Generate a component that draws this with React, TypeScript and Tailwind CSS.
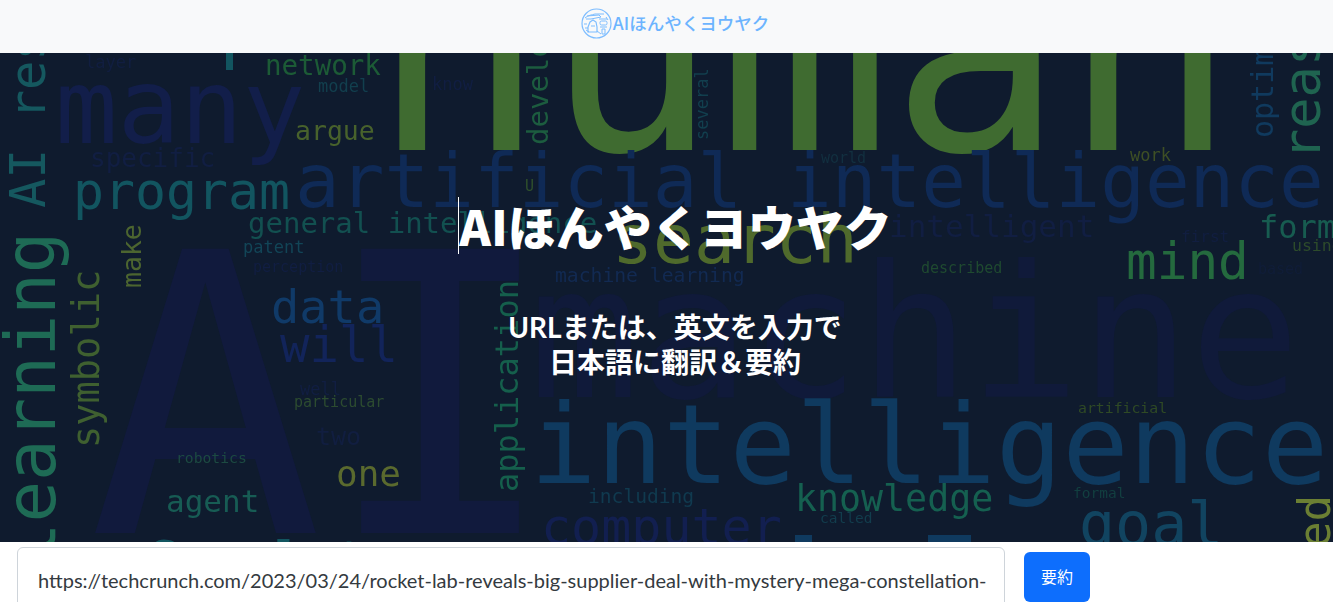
const lato = "font-['Lato','Noto_Sans_CJK_JP',sans-serif]";

// word cloud picture: [text, x, baseline, font size, colour, vertical]
type Word = [string, number, number, number, string, boolean?];

const words: Word[] = [
  ["AI", 88, 533, 390, "#111a3d"],
  ["machine", 529, 397, 183, "#101a3a"],
  ["human", 372, 150, 287, "#3f6b30"],
  ["intelligence", 530, 483, 110.5, "#0f3a5f"],
  ["artificial intelligence", 295, 207, 74.3, "#0f2a56"],
  ["many", 55, 143, 104, "#121e4a"],
  ["program", 73, 209, 51.5, "#125560"],
  ["network", 265, 75, 27.5, "#1c5b36"],
  ["model", 318, 92, 17, "#123f4e"],
  ["argue", 295, 140, 26.5, "#48622c"],
  ["specific", 90, 167, 26, "#111e42"],
  ["layer", 85, 68, 17, "#111e40"],
  ["general intelligence", 248, 233, 29, "#125050"],
  ["patent", 243, 253, 17, "#124557"],
  ["perception", 253, 272, 15, "#111e42"],
  ["data", 271, 323, 47, "#103a68"],
  ["will", 280, 362, 49, "#12245a"],
  ["well", 300, 395, 17, "#111e42"],
  ["particular", 294, 407, 15, "#2c4b30"],
  ["two", 316, 445, 25, "#111e40"],
  ["one", 336, 486, 36, "#5a6a2e"],
  ["robotics", 176, 463, 14.7, "#1c4a42"],
  ["agent", 166, 512, 31, "#175c54"],
  ["Searlet", 148, 578, 52, "#125560"],
  ["know", 432, 90, 17, "#111e42"],
  ["U", 525, 191, 15, "#2f4f2c"],
  ["search", 612, 263, 68, "#4f6a2c"],
  ["machine learning", 555, 282, 19.7, "#122a52"],
  ["world", 821, 163, 15, "#123040"],
  ["work", 1130, 161, 17, "#3e4f25"],
  ["intelligent", 889, 237, 31, "#111e42"],
  ["form", 1259, 238, 32, "#175c50"],
  ["using", 1292, 251, 16.5, "#2d4b2b"],
  ["mind", 1126, 279, 51, "#246a3e"],
  ["first", 1181, 242, 16, "#111e40"],
  ["described", 921, 273, 15, "#1f4a30"],
  ["based", 1258, 274, 15, "#101d38"],
  ["artificial", 1078, 413, 14.8, "#2f4a25"],
  ["formal", 1073, 498, 14.5, "#123f40"],
  ["called", 820, 523, 14.5, "#123d4d"],
  ["including", 588, 503, 19.6, "#103a4f"],
  ["knowledge", 795, 511, 36.6, "#156050"],
  ["computer", 541, 544, 50, "#121f50"],
  ["goal", 1079, 545, 60, "#114460"],
  ["make", 141, 288, 26.5, "#4c6530", true],
  ["symbolic", 99, 448, 37, "#3f6030", true],
  ["application", 518, 492, 32, "#155f4c", true],
  ["develop", 548, 145, 29, "#1c5c3f", true],
  ["several", 708, 140, 17, "#123f4e", true],
  ["optimization", 1273, 138, 30, "#103a5e", true],
  ["reasoning", 1320, 160, 52, "#1f6450", true],
  ["used", 1330, 601, 44, "#6b7f33", true],
  ["learning", 55, 564, 69, "#1e6b55", true],
  ["AI research", 45, 208, 49, "#15585f", true],
];

const WordCloud = () => {
  return (
    <svg
      className="absolute inset-0 blur-[0.5px]"
      width="1333"
      height="489"
      viewBox="0 53 1333 489"
      fontFamily="'DejaVu Sans Mono', monospace"
    >
      <rect x="-5" y="48" width="1343" height="499" fill="#0f1b2e" />
      {words.map(([text, x, y, size, color, vertical]) => (
        <text
          key={text + x}
          x={x}
          y={y}
          fontSize={size}
          fill={color}
          transform={vertical ? `rotate(-90 ${x} ${y})` : undefined}
        >
          {text}
        </text>
      ))}
      <rect x="226" y="53" width="7" height="17" fill="#125560" />
      <rect x="795" y="535" width="17" height="7" fill="#0f3a5f" />
      <rect x="928" y="535" width="43" height="7" fill="#0f3a5f" />
    </svg>
  );
};

const Logo = () => {
  return (
    <svg width="31" height="31" viewBox="0 0 31 31" fill="none" stroke="#7dbdff" strokeWidth="1">
      <circle cx="15.5" cy="15.5" r="14.5" strokeWidth="1.2" />
      <path d="M4 10c3-3 7-3 10-4h9M6 8l12-1 2 2-10 2H5" />
      <path d="M9 14l3-2 3 2 1 5v5H7v-5z" strokeWidth="1.2" />
      <path d="M10 18h4M8 24l-3-2M16 23l4 3" />
      <rect x="19" y="13" width="7" height="4" rx="1.5" />
      <path d="M19 19h7M21 21h3v5h-3zM3 16h3M25 9l2 3M18 11h8M4 20h3" />
    </svg>
  );
};

export default function App() {
  return (
    <div className={`h-screen overflow-hidden bg-white ${lato}`}>
      <header className="h-[53px] bg-[#f8f9fa] flex items-center justify-center gap-[1px] pl-[17px] pb-[6px]">
        <Logo />
        <span className="text-[17.5px] font-medium text-[#6cb4ff] font-['Noto_Sans_CJK_JP',sans-serif]">
          AIほんやくヨウヤク
        </span>
      </header>

      <section className="relative h-[489px] overflow-hidden pt-[144px]">
        <WordCloud />
        <div className="relative flex flex-col items-center pl-[17px] text-white font-bold">
          <h1 className="border-l border-white text-[48px] leading-[57px] font-['Noto_Sans_CJK_JP',sans-serif] font-black">
            AIほんやくヨウヤク
          </h1>
          <p className="mt-[56px] text-[28px] leading-[35px] text-center">
            URLまたは、英文を入力で
            <br />
            日本語に翻訳＆要約
          </p>
        </div>
      </section>

      <div className="flex items-start pl-[17px] gap-[19px]">
        <textarea
          readOnly
          rows={3}
          className={`mt-[5px] w-[988px] h-[90px] shrink-0 resize-none rounded-md border border-[#ced4da] pl-[20px] pr-[10px] py-[17px] text-[20px] leading-[30px] text-[#343a40] outline-none ${lato}`}
          value="https://techcrunch.com/2023/03/24/rocket-lab-reveals-big-supplier-deal-with-mystery-mega-constellation-customer/"
        />
        <button className="mt-[10px] w-[66px] h-[50px] rounded-md bg-[#0d6efd] text-white text-base">
          要約
        </button>
      </div>
    </div>
  );
}
